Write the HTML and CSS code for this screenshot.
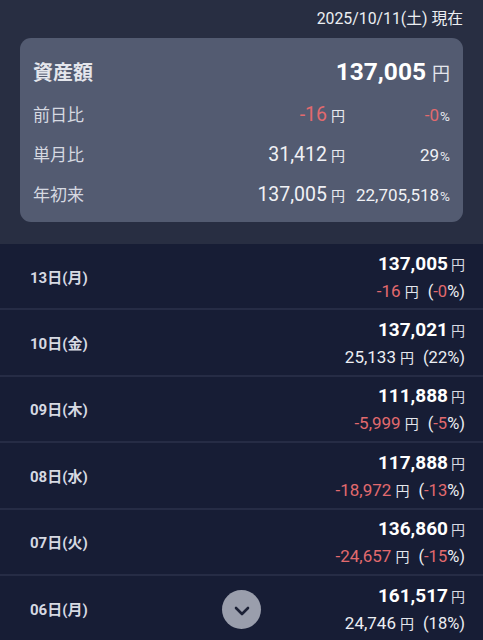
FILE: index.html
```html
<!DOCTYPE html>
<html lang="ja">
<head>
<meta charset="utf-8">
<title>資産額</title>
<link rel="stylesheet" href="styles.css">
</head>
<body>
<div class="header">
  <div class="asof">2025/10/11(土) 現在</div>
  <div class="card">
    <div class="card-title">
      <span class="title">資産額</span>
      <span class="total"><span class="total-num">137,005</span><span class="total-yen">円</span></span>
    </div>
    <div class="stat">
      <span class="stat-label">前日比</span>
      <span class="stat-amt"><span class="neg">-16</span><span class="yen">円</span></span>
      <span class="stat-pct"><span class="neg">-0</span><span class="pct">%</span></span>
    </div>
    <div class="stat">
      <span class="stat-label">単月比</span>
      <span class="stat-amt">31,412<span class="yen">円</span></span>
      <span class="stat-pct">29<span class="pct">%</span></span>
    </div>
    <div class="stat">
      <span class="stat-label">年初来</span>
      <span class="stat-amt">137,005<span class="yen">円</span></span>
      <span class="stat-pct">22,705,518<span class="pct">%</span></span>
    </div>
  </div>
</div>
<ul class="list">
  <li class="row">
    <span class="day">13日(月)</span>
    <div class="vals">
      <div class="val"><span class="val-num">137,005</span><span class="val-yen">円</span></div>
      <div class="diff"><span class="neg">-16</span><span class="diff-yen">円</span><span class="paren">(<span class="neg">-0</span>%)</span></div>
    </div>
  </li>
  <li class="row">
    <span class="day">10日(金)</span>
    <div class="vals">
      <div class="val"><span class="val-num">137,021</span><span class="val-yen">円</span></div>
      <div class="diff"><span>25,133</span><span class="diff-yen">円</span><span class="paren">(22%)</span></div>
    </div>
  </li>
  <li class="row">
    <span class="day">09日(木)</span>
    <div class="vals">
      <div class="val"><span class="val-num">111,888</span><span class="val-yen">円</span></div>
      <div class="diff"><span class="neg">-5,999</span><span class="diff-yen">円</span><span class="paren">(<span class="neg">-5</span>%)</span></div>
    </div>
  </li>
  <li class="row">
    <span class="day">08日(水)</span>
    <div class="vals">
      <div class="val"><span class="val-num">117,888</span><span class="val-yen">円</span></div>
      <div class="diff"><span class="neg">-18,972</span><span class="diff-yen">円</span><span class="paren">(<span class="neg">-13</span>%)</span></div>
    </div>
  </li>
  <li class="row">
    <span class="day">07日(火)</span>
    <div class="vals">
      <div class="val"><span class="val-num">136,860</span><span class="val-yen">円</span></div>
      <div class="diff"><span class="neg">-24,657</span><span class="diff-yen">円</span><span class="paren">(<span class="neg">-15</span>%)</span></div>
    </div>
  </li>
  <li class="row">
    <span class="day">06日(月)</span>
    <div class="vals">
      <div class="val"><span class="val-num">161,517</span><span class="val-yen">円</span></div>
      <div class="diff"><span>24,746</span><span class="diff-yen">円</span><span class="paren">(18%)</span></div>
    </div>
  </li>
</ul>
<button class="scroll-btn" aria-label="下へ">
  <svg width="16" height="10" viewBox="0 0 16 10"><path d="M2 2 L8 8 L14 2" fill="none" stroke="#1c2136" stroke-width="2.6" stroke-linecap="round" stroke-linejoin="round"/></svg>
</button>
</body>
</html>
```

FILE: styles.css
```css
* { box-sizing: border-box; }
html, body {
  margin: 0;
  padding: 0;
  background: #171d35;
  font-family: Roboto, "Noto Sans CJK JP", sans-serif;
  color: #eceef3;
  overflow: hidden;
  height: 640px;
}
.header {
  background: #282e42;
  padding: 8px 20px 22px 20px;
}
.asof {
  text-align: right;
  font-size: 15.8px;
  line-height: 22px;
  color: #eceef2;
  margin-bottom: 8px;
}
.card {
  background: #535b71;
  border-radius: 11px;
  padding: 14px 13px 7px 13px;
}
.card-title {
  display: flex;
  justify-content: space-between;
  align-items: center;
  height: 38px;
  margin-bottom: 5px;
}
.title {
  font-size: 20px;
  font-weight: 700;
  color: #e4e6ec;
}
.total { display: flex; align-items: baseline; }
.total-num {
  font-size: 24.5px;
  font-weight: 700;
  color: #ffffff;
}
.total-yen {
  font-size: 18px;
  margin-left: 6px;
  color: #e4e6ec;
}
.stat {
  display: grid;
  grid-template-columns: 1fr auto 100px;
  column-gap: 5px;
  align-items: baseline;
  height: 40px;
  line-height: 40px;
}
.stat-label {
  font-size: 17px;
  color: #d6d9e1;
}
.stat-amt {
  font-size: 19.5px;
  text-align: right;
  color: #f0f1f5;
}
.stat-pct {
  font-size: 17px;
  text-align: right;
  color: #f0f1f5;
}
.yen { font-size: 14px; margin-left: 4px; color: #e8eaef; }
.pct { font-size: 13.5px; margin-left: 1px; color: #e8eaef; }
.neg { color: #e26a6e; }

.list {
  list-style: none;
  margin: 0;
  padding: 0;
}
.row {
  display: flex;
  justify-content: space-between;
  align-items: center;
  height: 66.4px;
  padding: 0 18px 0 30px;
  border-bottom: 2px solid #262c45;
}
.day {
  font-size: 15px;
  font-weight: 700;
  color: #d6d9e2;
}
.vals {
  display: flex;
  flex-direction: column;
  align-items: flex-end;
  padding-top: 3px;
}
.val {
  display: flex;
  align-items: baseline;
  line-height: 25px;
}
.val-num {
  font-size: 19px;
  font-weight: 700;
  color: #ffffff;
}
.val-yen {
  font-size: 14px;
  margin-left: 3px;
  color: #d8dae2;
}
.diff {
  display: flex;
  align-items: baseline;
  font-size: 17px;
  line-height: 26px;
  color: #eceef3;
}
.diff-yen {
  font-size: 14px;
  margin-left: 4px;
  color: #e4e6ec;
}
.paren {
  margin-left: 9px;
  font-size: 16.5px;
}
.scroll-btn {
  position: absolute;
  left: 222px;
  top: 590px;
  width: 39px;
  height: 39px;
  border-radius: 50%;
  border: none;
  background: #9a9eac;
  display: flex;
  align-items: center;
  justify-content: center;
  padding: 0;
}
.scroll-btn svg { display: block; margin-top: 2px; }
```
